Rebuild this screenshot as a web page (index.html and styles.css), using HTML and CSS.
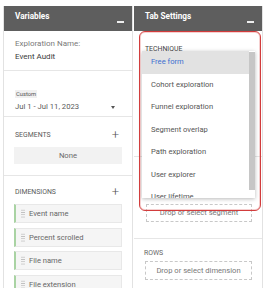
FILE: index.html
```html
<!DOCTYPE html>
<html lang="en">
<head>
    <meta charset="UTF-8">
    <meta name="viewport" content="width=device-width, initial-scale=1.0">
    <title>Exploration - Event Audit</title>
    <link rel="stylesheet" href="styles.css">
</head>
<body>
    <div class="workspace">
        <section class="panel variables">
            <header class="panel-head">
                <span class="panel-title">Variables</span>
                <span class="minimize"></span>
            </header>

            <div class="block name-block">
                <div class="field-label">Exploration Name:</div>
                <div class="field-value">Event Audit</div>
            </div>

            <div class="block date-block">
                <div class="date-tag">Custom</div>
                <div class="date-row">
                    <span>Jul 1 - Jul 11, 2023</span>
                    <span class="caret"></span>
                </div>
            </div>

            <div class="block segments">
                <div class="block-head">
                    <span class="caps">Segments</span>
                    <span class="plus">+</span>
                </div>
                <div class="none-box">None</div>
            </div>

            <div class="block dimensions">
                <div class="block-head">
                    <span class="caps">Dimensions</span>
                    <span class="plus">+</span>
                </div>
                <ul class="chips">
                    <li class="chip"><span class="grip"></span>Event name</li>
                    <li class="chip"><span class="grip"></span>Percent scrolled</li>
                    <li class="chip"><span class="grip"></span>File name</li>
                    <li class="chip"><span class="grip"></span>File extension</li>
                    <li class="chip"><span class="grip"></span></li>
                </ul>
            </div>
        </section>

        <section class="panel settings">
            <header class="panel-head">
                <span class="panel-title">Tab Settings</span>
                <span class="minimize"></span>
            </header>

            <div class="technique">
                <span class="caps dotted">Technique</span>
                <div class="select-line"></div>
            </div>

            <!-- sits under the open menu -->
            <div class="block visual">
                <div class="viz-grid">
                    <span></span><span></span><span></span><span></span>
                    <span></span><span></span><span></span><span></span>
                </div>
            </div>

            <div class="block compare">
                <div class="drop-box segment-drop">Drop or select segment</div>
            </div>

            <div class="block rows">
                <div class="caps">Rows</div>
                <div class="drop-box">Drop or select dimension</div>
            </div>

            <div class="block values">
                <div class="block-head">
                    <span class="tick"></span>
                    <span class="tick"></span>
                </div>
            </div>

            <!-- open technique dropdown -->
            <div class="technique-menu">
                <ul class="menu-list">
                    <li class="menu-item active">Free form</li>
                    <li class="menu-item">Cohort exploration</li>
                    <li class="menu-item">Funnel exploration</li>
                    <li class="menu-item">Segment overlap</li>
                    <li class="menu-item">Path exploration</li>
                    <li class="menu-item">User explorer</li>
                    <li class="menu-item">User lifetime</li>
                </ul>
                <div class="scroll-track"><div class="scroll-thumb"></div></div>
            </div>

            <div class="annotation"></div>
        </section>
    </div>
</body>
</html>
```
FILE: styles.css
```css
* {
    margin: 0;
    padding: 0;
    box-sizing: border-box;
}

body {
    font-family: 'Roboto', 'Noto Sans', sans-serif;
    background: #fff;
    color: #444;
    width: 273px;
    height: 288px;
    overflow: hidden;
}

.workspace {
    display: flex;
    gap: 1px;
    padding: 6px 0 0 3px;
    height: 288px;
}

.panel {
    position: relative;
    background: #fff;
    border-left: 1px solid #e2e2e2;
    border-right: 1px solid #e2e2e2;
    height: 100%;
    overflow: hidden;
}

.variables {
    width: 130px;
}

.settings {
    width: 129px;
    border-left: none;
}

.panel-head {
    display: flex;
    justify-content: space-between;
    align-items: flex-start;
    height: 25px;
    margin: 0 -1px;
    padding: 5px 9px 0 12px;
    background: #5e5e5e;
    color: #fff;
}

.settings .panel-head {
    margin-left: 0;
    padding-left: 11px;
}

.panel-title {
    font-size: 8.2px;
    font-weight: bold;
    line-height: 11px;
}

.minimize {
    width: 7px;
    height: 1.5px;
    margin-top: 10px;
    background: #eee;
}

.block {
    padding: 0 10px;
    border-bottom: 1px solid #e6e6e6;
}

.caps {
    font-size: 6.9px;
    line-height: 10px;
    text-transform: uppercase;
    color: #5a5a5a;
}

.block-head {
    display: flex;
    justify-content: space-between;
    align-items: center;
    height: 10px;
    padding: 0 3px 0 1px;
}

.plus {
    font-size: 13px;
    font-weight: 300;
    line-height: 10px;
    color: #555;
}

/* exploration name */
.name-block {
    padding: 7px 10px 7px 11px;
}

.field-label {
    font-size: 8px;
    line-height: 12px;
    color: #7a7a7a;
}

.field-value {
    margin-top: 1px;
    font-size: 8px;
    line-height: 12px;
    color: #3a3a3a;
}

/* date range */
.date-block {
    padding: 10px 17px 3px 11px;
}

.date-tag {
    display: inline-block;
    height: 8px;
    padding: 0 1px;
    background: #f0f0f0;
    font-size: 5.8px;
    line-height: 8px;
    color: #555;
}

.date-row {
    display: flex;
    justify-content: space-between;
    align-items: center;
    margin-top: 1px;
    font-size: 7.7px;
    line-height: 12px;
    color: #5a5a5a;
}

.caret {
    border-top: 3px solid #555;
    border-left: 2.5px solid transparent;
    border-right: 2.5px solid transparent;
}

/* segments */
.segments {
    padding-top: 13px;
    padding-bottom: 11px;
}

.none-box {
    margin-top: 7px;
    height: 17px;
    background: #f2f2f2;
    font-size: 7.7px;
    line-height: 17px;
    text-align: center;
    color: #6a6a6a;
}

/* dimensions */
.dimensions {
    padding-top: 11px;
    border-bottom: none;
}

.chips {
    list-style: none;
    margin-top: 7px;
}

.chip {
    display: flex;
    align-items: center;
    gap: 4px;
    height: 19px;
    margin-bottom: 4.5px;
    padding-left: 5px;
    background: #f5f5f5;
    border: 1px solid #e8e8e8;
    border-left: 2px solid #a9d3a3;
    font-size: 7.6px;
    color: #666;
}

.grip {
    width: 4px;
    height: 9px;
    background-image: radial-gradient(circle, #bdbdbd 0.7px, transparent 0.9px);
    background-size: 2px 2.3px;
}

/* tab settings */
.technique {
    padding: 5px 9px 0 11px;
}

.dotted {
    display: inline-block;
    line-height: 10px;
    color: #444;
    border-bottom: 1px dotted #888;
}

.select-line {
    height: 1px;
    margin: 3px 0 0 -2px;
    background: #6b95de;
}

.visual {
    height: 98px;
    padding: 33px 10px 0 11px;
}

.viz-grid {
    display: grid;
    grid-template-columns: repeat(4, 20px);
    gap: 6px;
}

.viz-grid span {
    height: 22px;
    background: #eee;
}

.compare {
    padding: 47px 10px 16px 12px;
}

.drop-box {
    height: 19px;
    border: 1px dashed #c8c8c8;
    font-size: 7.6px;
    line-height: 17px;
    text-align: center;
    color: #777;
}

.segment-drop {
    height: 18px;
    line-height: 16px;
}

.rows {
    padding: 9px 10px 13px 11px;
}

.rows .caps {
    margin-left: -1px;
    color: #666;
}

.rows .drop-box {
    margin-top: 3px;
}

.values {
    padding: 2px 10px 0 11px;
    border-bottom: none;
}

.tick {
    width: 4px;
    height: 2px;
    background: #777;
}

/* dropdown open over the settings */
.technique-menu {
    position: absolute;
    left: 8px;
    top: 45px;
    width: 113px;
    height: 147px;
    display: flex;
    background: #fff;
    box-shadow: 0 1px 4px rgba(0,0,0,0.28);
    overflow: hidden;
}

.menu-list {
    list-style: none;
    flex: 1;
}

.menu-item {
    height: 22.5px;
    padding-left: 9px;
    font-size: 7.6px;
    line-height: 22.5px;
    color: #555;
}

.menu-item.active {
    background: #e2e2e2;
    color: #3d6fd0;
}

.scroll-track {
    width: 6px;
    padding-top: 1px;
}

.scroll-thumb {
    height: 138px;
    background: #c6c6c6;
}

/* red highlight drawn on the screenshot */
.annotation {
    position: absolute;
    left: 5px;
    top: 25px;
    width: 122px;
    height: 180px;
    border: 1.5px solid #d23c3c;
    border-radius: 6px;
    box-shadow: inset 0 0 0 1px rgba(230,120,120,0.35);
}
```
